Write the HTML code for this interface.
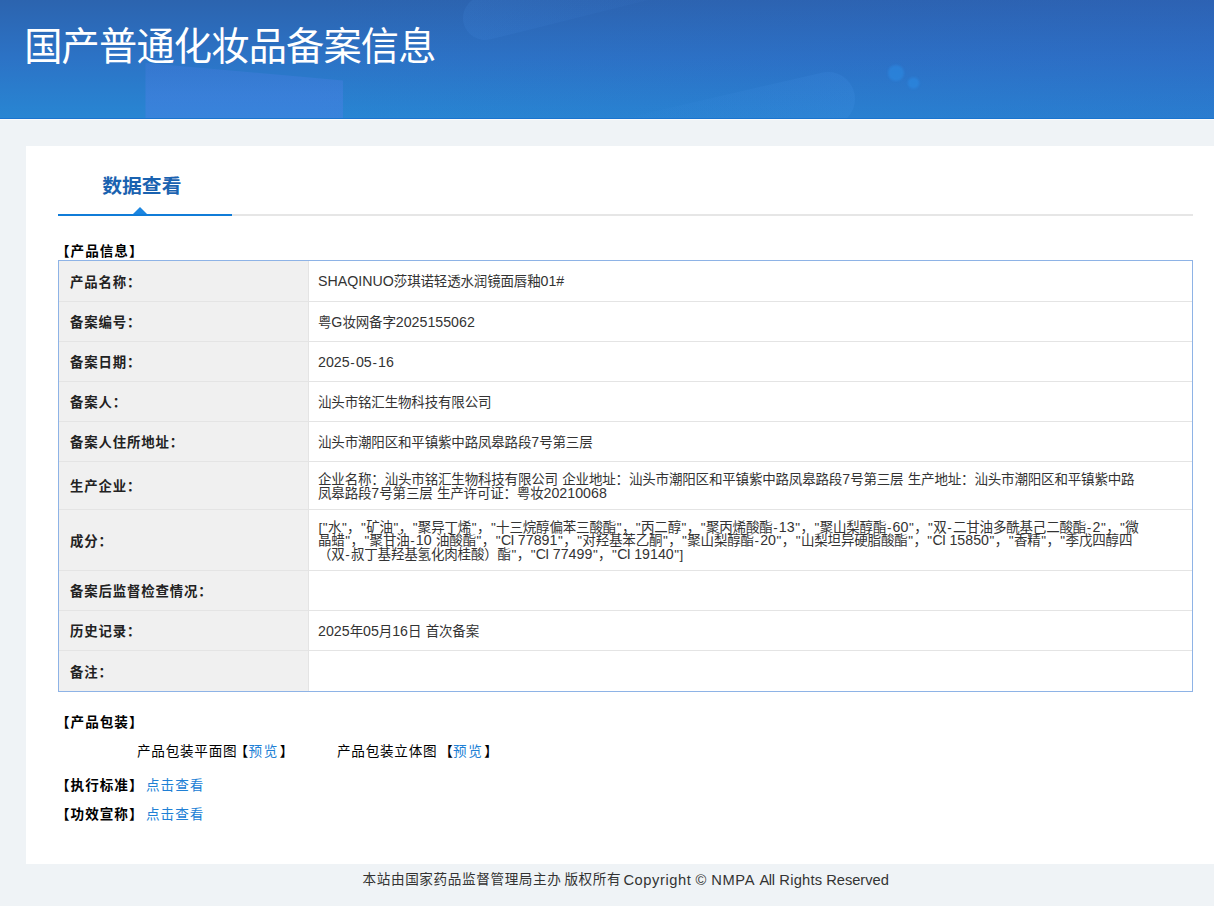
<!DOCTYPE html>
<html lang="zh-CN">
<head>
<meta charset="utf-8">
<title>国产普通化妆品备案信息</title>
<style>
*{box-sizing:border-box;margin:0;padding:0}
html,body{width:1214px;height:906px;overflow:hidden}
body{background:#eff3f6;font-family:"Liberation Sans","Noto Sans CJK SC",sans-serif;font-size:13px;color:#333;position:relative}
.hdr{position:absolute;left:0;top:0;width:1214px;height:119px;overflow:hidden;border-bottom:1px solid #1a74cf;
 background:linear-gradient(90deg,rgba(48,92,195,0) 25%,rgba(48,92,195,.22) 100%),linear-gradient(180deg,#2c64af 0%,#2c73c6 50%,#2886d3 100%)}
.hline{position:absolute;left:0;top:119px;width:1214px;height:1px;background:#fafbfc}
.hdr svg{position:absolute;left:0;top:0}
.hdr h1{position:absolute;left:24.2px;top:21px;font-size:38.2px;line-height:52px;font-weight:400;color:#fff;white-space:nowrap;letter-spacing:-.78px}
.panel{position:absolute;left:26px;top:146px;width:1188px;height:718px;background:#fff}
.tab{position:absolute;left:76.3px;top:25.5px;font-size:19.8px;line-height:28px;font-weight:700;color:#1a62b0;white-space:nowrap}
.tabline{position:absolute;left:32px;top:68px;width:1135px;height:2px;background:#e6e6e6}
.tabline span{position:absolute;left:0;top:0;width:174px;height:2px;background:#107cd8}
.tri{position:absolute;left:106.5px;top:61px;width:0;height:0;border-left:7px solid transparent;border-right:7px solid transparent;border-bottom:7px solid #1c86e0}
.sec{position:absolute;left:30px;font-weight:700;color:#000;font-size:13.6px;letter-spacing:1px;line-height:16px;white-space:nowrap}
table{position:absolute;left:32px;top:114px;width:1135px;border-collapse:separate;border-spacing:0;border:1px solid #8eb3e6;table-layout:fixed}
td{border-top:1px solid #e4e4e4;vertical-align:middle;font-size:13.5px;letter-spacing:-.17px;line-height:13.33px;padding:2px 10px 0 9px;color:#333;white-space:nowrap}
td{word-spacing:.74px}
b,i,u{font-weight:inherit;font-style:normal;text-decoration:none;word-spacing:0}
b{font-size:14.2px;letter-spacing:.02px}
.c{letter-spacing:-.8px}
i{letter-spacing:.4px;padding-left:.6px}
u{letter-spacing:0;padding:0 1.1px 0 .67px}
tr:first-child td{border-top:none}
td.l{width:250px;background:#f0f0f0;font-weight:700;color:#222;border-right:1px solid #e4e4e4;font-size:13.4px;letter-spacing:.85px;padding:3px 10px 0 11px}
.txt{position:absolute;font-size:13.6px;letter-spacing:.75px;line-height:16px;white-space:nowrap;color:#000}
a{color:#2080d5;text-decoration:none}
.ft{position:absolute;left:362.5px;top:870px;text-align:left;letter-spacing:.62px;word-spacing:-1.5px;font-size:13.6px;line-height:20px;color:#333;white-space:nowrap}
.w{position:absolute;top:0;font-size:14.7px;word-spacing:0}
.lk{font-weight:400;margin-left:-2.4px}
.pv{letter-spacing:1.6px;margin:0 .8px 0 -.5px}
.lb{margin-left:-2.8px}
</style>
</head>
<body>
<div class="hdr">
 <svg width="1214" height="118" viewBox="0 0 1214 118">
  <polygon points="145.5,63 343,80.5 343,118 145.5,118" fill="url(#g0)"/>
  <defs><filter id="bl" x="-30%" y="-30%" width="160%" height="160%"><feGaussianBlur stdDeviation="1"/></filter><linearGradient id="g0" x1="0" x2="0" y1="0" y2="1"><stop offset="0" stop-color="#5580ea" stop-opacity=".22"/><stop offset=".6" stop-color="#5580ea" stop-opacity=".36"/><stop offset="1" stop-color="#5580ea" stop-opacity=".36"/></linearGradient><linearGradient id="g1" x1="0" x2="1" y1="0" y2="0"><stop offset="0" stop-color="#4b93ea" stop-opacity=".13"/><stop offset=".8" stop-color="#4b93ea" stop-opacity="0"/></linearGradient><linearGradient id="g2" x1="1" x2="0" y1="0" y2="0"><stop offset="0" stop-color="#4b9af0" stop-opacity=".15"/><stop offset=".8" stop-color="#4b9af0" stop-opacity="0"/></linearGradient></defs>
  <rect x="463" y="-4" width="330" height="44" rx="22" fill="url(#g1)" transform="rotate(-14 485 18)"/>
  <rect x="525" y="72" width="330" height="54" rx="27" fill="url(#g2)" transform="rotate(-13 828 99)"/>
  <circle cx="896" cy="73" r="8" fill="#2c8ee8" opacity="0.5" filter="url(#bl)"/>
  <circle cx="913.5" cy="83" r="5.8" fill="#2c8ee8" opacity="0.5" filter="url(#bl)"/>
 </svg>
 <h1>国产普通化妆品备案信息</h1>
</div>
<div class="hline"></div>
<div class="panel">
<div class="tab">数据查看</div>
<div class="tabline"><span></span></div>
<div class="tri"></div>
<div class="sec" style="top:97.5px">【产品信息】</div>
<table>
 <tr style="height:40px"><td class="l">产品名称：</td><td><b>SHAQINUO</b>莎琪诺轻透水润镜面唇釉<b>01#</b></td></tr>
 <tr style="height:40px"><td class="l">备案编号：</td><td>粤<b>G</b>妆网备字<b>2025155062</b></td></tr>
 <tr style="height:40px"><td class="l">备案日期：</td><td><b>2025</b><u>-</u><b>05</b><u>-</u><b>16</b></td></tr>
 <tr style="height:40px"><td class="l">备案人：</td><td>汕头市铭汇生物科技有限公司</td></tr>
 <tr style="height:40px"><td class="l">备案人住所地址：</td><td>汕头市潮阳区和平镇紫中路凤皋路段<b>7</b>号第三层</td></tr>
 <tr style="height:48px"><td class="l">生产企业：</td><td>企业名称：汕头市铭汇生物科技有限公司 企业地址：汕头市潮阳区和平镇紫中路凤皋路段<b>7</b>号第三层 生产地址：汕头市潮阳区和平镇紫中路<br>凤皋路段<b>7</b>号第三层 生产许可证：粤妆<b>20210068</b></td></tr>
 <tr style="height:61px"><td class="l">成分：</td><td><i>["</i>水<i>"</i>，<i>"</i>矿油<i>"</i>，<i>"</i>聚异丁烯<i>"</i>，<i>"</i>十三烷醇偏苯三酸酯<i>"</i>，<i>"</i>丙二醇<i>"</i>，<i>"</i>聚丙烯酸酯<u>-</u><b>13</b><i>"</i>，<i>"</i>聚山梨醇酯<u>-</u><b>60</b><i>"</i>，<i>"</i>双<u>-</u>二甘油多酰基己二酸酯<u>-</u><b>2</b><i>"</i>，<i>"</i>微<br>晶蜡<i>"</i>，<i>"</i>聚甘油<u>-</u><b>10</b> 油酸酯<i>"</i>，<i>"</i><b class="c">CI</b> <b>77891</b><i>"</i>，<i>"</i>对羟基苯乙酮<i>"</i>，<i>"</i>聚山梨醇酯<u>-</u><b>20</b><i>"</i>，<i>"</i>山梨坦异硬脂酸酯<i>"</i>，<i>"</i><b class="c">CI</b> <b>15850</b><i>"</i>，<i>"</i>香精<i>"</i>，<i>"</i>季戊四醇四<br>（双<u>-</u>叔丁基羟基氢化肉桂酸）酯<i>"</i>，<i>"</i><b class="c">CI</b> <b>77499</b><i>"</i>，<i>"</i><b class="c">CI</b> <b>19140</b><i>"]</i></td></tr>
 <tr style="height:40px"><td class="l">备案后监督检查情况：</td><td></td></tr>
 <tr style="height:40px"><td class="l">历史记录：</td><td><b>2025</b>年<b>05</b>月<b>16</b>日 首次备案</td></tr>
 <tr style="height:41px"><td class="l">备注：</td><td></td></tr>
</table>
<div class="sec" style="top:569.4px">【产品包装】</div>
<div class="txt" style="left:111px;top:598.3px">产品包装平面图<span class="lb">【</span><a class="pv">预览</a>】</div>
<div class="txt" style="left:311px;top:598.3px">产品包装立体图 <span class="lb">【</span><a class="pv">预览</a>】</div>
<div class="sec" style="top:632.4px">【执行标准】 <a class="lk">点击查看</a></div>
<div class="sec" style="top:661.4px">【功效宣称】 <a class="lk">点击查看</a></div>
</div>
<div class="ft">本站由国家药品监督管理局主办 版权所有 <span class="w" style="left:260.9px;letter-spacing:0.57px">Copyright</span> <span class="w" style="left:332.9px;letter-spacing:0.00px">©</span> <span class="w" style="left:348.8px;letter-spacing:0.61px">NMPA</span> <span class="w" style="left:396.9px;letter-spacing:-0.39px">All</span> <span class="w" style="left:416.8px;letter-spacing:0.23px">Rights</span> <span class="w" style="left:463.7px;letter-spacing:-0.03px">Reserved</span></div>
</body>
</html>
